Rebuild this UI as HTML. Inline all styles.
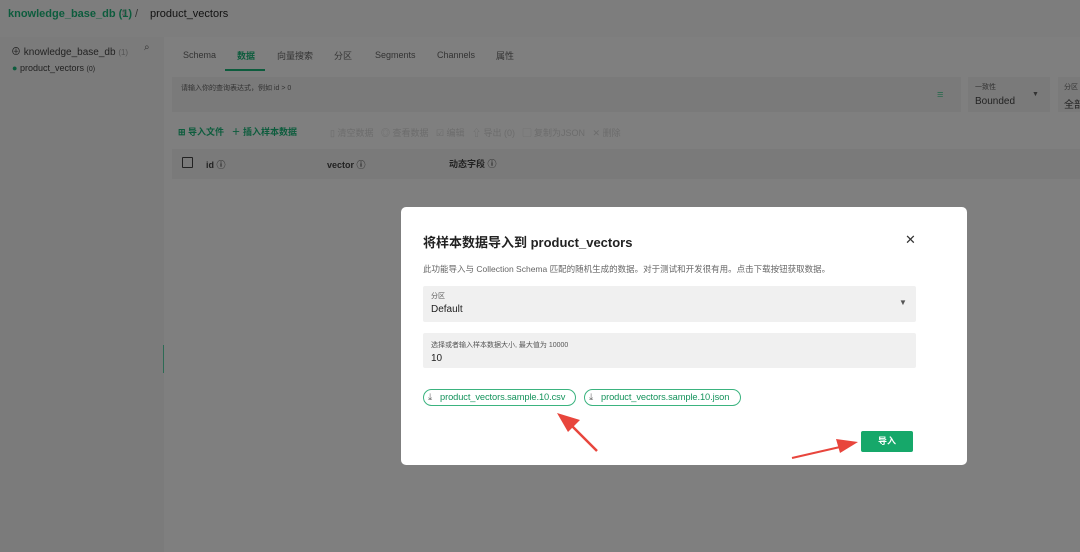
<!DOCTYPE html>
<html><head><meta charset="utf-8"><style>
*{box-sizing:border-box;margin:0;padding:0}
body{width:1080px;height:552px;overflow:hidden;background:#7f7f7f;font-family:"Liberation Sans","Noto Sans CJK SC",sans-serif;position:relative;color:#111}
.abs{position:absolute;white-space:nowrap}
.top{left:0;top:0;width:1080px;height:37px;background:#7d7d7d}
.side{left:0;top:37px;width:164px;height:515px;background:#7b7b7b}
.modal{left:401px;top:207px;width:566px;height:258px;background:#fff;border-radius:5px}
.field{background:#f0f0f0;position:absolute;left:22px;width:493px;border-radius:2px}
.chip{position:absolute;top:182px;height:17px;border:1px solid #3bb37f;border-radius:9px;color:#15935c;font-size:9.3px;line-height:15px;padding-left:16px;white-space:nowrap;letter-spacing:-0.1px}
</style></head><body>
<div class="abs top"></div>
<div class="abs" style="left:8px;top:8px;font-size:11px;font-weight:bold;color:#0d5c3d">knowledge_base_db (1)</div>
<div class="abs" style="left:120px;top:8px;font-size:9px;color:#555">⇕</div>
<div class="abs" style="left:135px;top:8px;font-size:11px;color:#333">/</div>
<div class="abs" style="left:150px;top:8px;font-size:11px;color:#111">product_vectors</div>
<div class="abs side"></div>
<div class="abs" style="left:11px;top:43px;font-size:10px;color:#222">⊕ knowledge_base_db <span style="font-size:8px;color:#555">(1)</span></div>
<div class="abs" style="left:144px;top:42px;font-size:10px;color:#333">⌕</div>
<div class="abs" style="left:12px;top:63px;font-size:9px;color:#222"><span style="color:#0d5c3d">●</span> product_vectors <span style="font-size:7px">(0)</span></div>
<div class="abs" style="left:163px;top:345px;width:1px;height:28px;background:#2d6b55"></div>
<div class="abs" style="left:183px;top:50px;font-size:9px;color:#333">Schema</div>
<div class="abs" style="left:237px;top:49px;font-size:9px;color:#0d5c3d;font-weight:bold">数据</div>
<div class="abs" style="left:225px;top:69px;width:40px;height:2px;background:#0d5c3d"></div>
<div class="abs" style="left:277px;top:49px;font-size:9px;color:#333">向量搜索</div>
<div class="abs" style="left:334px;top:49px;font-size:9px;color:#333">分区</div>
<div class="abs" style="left:375px;top:50px;font-size:9px;color:#333">Segments</div>
<div class="abs" style="left:437px;top:50px;font-size:9px;color:#333">Channels</div>
<div class="abs" style="left:496px;top:49px;font-size:9px;color:#333">属性</div>
<div class="abs" style="left:172px;top:77px;width:789px;height:35px;background:#7a7a7a"></div>
<div class="abs" style="left:181px;top:83px;font-size:7px;color:#333">请输入你的查询表达式，例如 id &gt; 0</div>
<div class="abs" style="left:937px;top:89px;font-size:11px;color:#2a6a4e">≡</div>
<div class="abs" style="left:968px;top:77px;width:82px;height:35px;background:#7a7a7a"></div>
<div class="abs" style="left:975px;top:82px;font-size:7px;color:#333">一致性</div>
<div class="abs" style="left:975px;top:96px;font-size:10px;color:#222">Bounded</div>
<div class="abs" style="left:1032px;top:91px;font-size:7px;color:#333">▼</div>
<div class="abs" style="left:1058px;top:77px;width:22px;height:35px;background:#7a7a7a"></div>
<div class="abs" style="left:1064px;top:82px;font-size:7px;color:#333">分区</div>
<div class="abs" style="left:1064px;top:96px;font-size:10px;color:#222">全部</div>
<div class="abs" style="left:178px;top:125px;font-size:9px;font-weight:bold;color:#0d5c3d">⊞ 导入文件 &nbsp; ＋ 插入样本数据</div>
<div class="abs" style="left:330px;top:126px;font-size:9px;color:#6c6c6c">▯ 清空数据 &nbsp; ◎ 查看数据 &nbsp; ☑ 编辑 &nbsp; ⇧ 导出 (0) &nbsp; ▢ 复制为JSON &nbsp; ✕ 删除</div>
<div class="abs" style="left:172px;top:149px;width:908px;height:30px;background:#7a7a7a"></div>
<div class="abs" style="left:182px;top:157px;width:11px;height:11px;border:1px solid #222;border-radius:1px"></div>
<div class="abs" style="left:206px;top:158px;font-size:9px;font-weight:bold;color:#222">id ⓘ</div>
<div class="abs" style="left:327px;top:158px;font-size:9px;font-weight:bold;color:#222">vector ⓘ</div>
<div class="abs" style="left:449px;top:157px;font-size:9px;font-weight:bold;color:#222">动态字段 ⓘ</div>

<div class="abs modal">
 <div class="abs" style="left:22px;top:25px;font-size:13px;font-weight:bold;color:#222">将样本数据导入到 product_vectors</div>
 <div class="abs" style="left:504px;top:25px;font-size:13px;color:#333">✕</div>
 <div class="abs" style="left:22px;top:56px;font-size:8.5px;color:#666">此功能导入与 Collection Schema 匹配的随机生成的数据。对于测试和开发很有用。点击下载按钮获取数据。</div>
 <div class="field" style="top:79px;height:36px">
  <div class="abs" style="left:8px;top:5px;font-size:7px;color:#555">分区</div>
  <div class="abs" style="left:8px;top:18px;font-size:10px;color:#222">Default</div>
  <div class="abs" style="left:476px;top:12px;font-size:8px;color:#555">▼</div>
 </div>
 <div class="field" style="top:126px;height:35px">
  <div class="abs" style="left:8px;top:7px;font-size:7px;color:#555">选择或者输入样本数据大小, 最大值为 10000</div>
  <div class="abs" style="left:8px;top:20px;font-size:10px;color:#222">10</div>
 </div>
 <div class="chip" style="left:22px;width:153px"><span class="abs" style="left:4px;top:0;color:#666">⤓</span>product_vectors.sample.10.csv</div>
 <div class="chip" style="left:183px;width:157px"><span class="abs" style="left:4px;top:0;color:#666">⤓</span>product_vectors.sample.10.json</div>
 <div class="abs" style="left:460px;top:224px;width:52px;height:21px;background:#16a86a;border-radius:2px;color:#fff;font-size:9px;font-weight:bold;text-align:center;line-height:21px">导入</div>
</div>
<svg class="abs" style="left:0;top:0" width="1080" height="552">
 <path d="M597 451 L570 424" stroke="#e8453c" stroke-width="2.5"/>
 <polygon points="557,413 580,420 568,432" fill="#e8453c"/>
 <path d="M792 458 L840 447" stroke="#e8453c" stroke-width="2"/>
 <polygon points="858,442 836,439 840,453" fill="#e8453c"/>
</svg>
</body></html>
